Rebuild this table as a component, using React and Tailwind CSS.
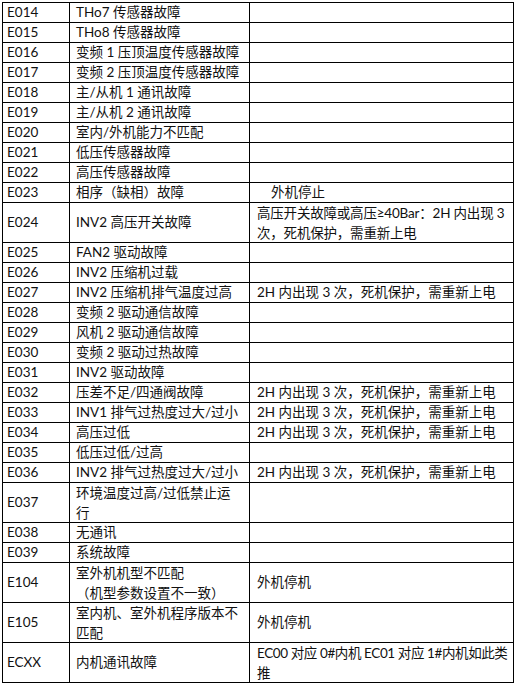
import React from "react";

const R2 = "2H 内出现 3 次，死机保护，需重新上电";

const rows = [
  ["E014", "THo7 传感器故障"],
  ["E015", "THo8 传感器故障"],
  ["E016", "变频 1 压顶温度传感器故障"],
  ["E017", "变频 2 压顶温度传感器故障"],
  ["E018", "主/从机 1 通讯故障"],
  ["E019", "主/从机 2 通讯故障"],
  ["E020", "室内/外机能力不匹配"],
  ["E021", "低压传感器故障"],
  ["E022", "高压传感器故障"],
  ["E023", "相序（缺相）故障", "外机停止", false, "pl-[21px]"],
  ["E024", "INV2 高压开关故障", ["高压开关故障或高压≥40Bar：2H 内出现 3", "次，死机保护，需重新上电"], true, "pl-[7px] tracking-[-0.2px]"],
  ["E025", "FAN2 驱动故障"],
  ["E026", "INV2 压缩机过载"],
  ["E027", "INV2 压缩机排气温度过高", R2],
  ["E028", "变频 2 驱动通信故障"],
  ["E029", "风机 2 驱动通信故障"],
  ["E030", "变频 2 驱动过热故障"],
  ["E031", "INV2 驱动故障"],
  ["E032", "压差不足/四通阀故障", R2],
  ["E033", "INV1 排气过热度过大/过小", R2],
  ["E034", "高压过低", R2],
  ["E035", "低压过低/过高"],
  ["E036", "INV2 排气过热度过大/过小", R2],
  ["E037", ["环境温度过高/过低禁止运", "行"], "", true],
  ["E038", "无通讯"],
  ["E039", "系统故障"],
  ["E104", ["室外机机型不匹配", "（机型参数设置不一致）"], "外机停机", true],
  ["E105", ["室内机、室外机程序版本不", "匹配"], "外机停机", true],
  ["ECXX", "内机通讯故障", ["EC00 对应 0#内机 EC01 对应 1#内机如此类", "推"], true, "pl-[7px] tracking-[-0.4px]"],
];

function Lines({ v, tall }) {
  if (Array.isArray(v)) {
    return (
      <div className={tall ? "leading-[20px]" : "leading-[19px]"}>
        {v.map((l, i) => (
          <div key={i} className="whitespace-nowrap">
            {l}
          </div>
        ))}
      </div>
    );
  }
  return <div className="whitespace-nowrap leading-[19px]">{v}</div>;
}

export default function App() {
  return (
    <div className="w-[516px] h-[685px] bg-white pt-[2px] pl-[2px]">
      <div
        className="grid grid-cols-[66px_179px_263px] gap-px bg-black p-px w-[512px] text-[13.5px] text-[#111]"
        style={{ fontFamily: '"Lato", "Noto Sans CJK SC", sans-serif' }}
      >
        {rows.map(([code, desc, note = "", tall = false, noteCls = "pl-[7px]"]) => {
          const h = tall ? "h-[39px]" : "h-[19px]";
          return (
            <React.Fragment key={code}>
              <div className={`bg-white ${h} flex items-center pl-[4px]`}>
                <div className="leading-[19px]">{code}</div>
              </div>
              <div className={`bg-white ${h} flex items-center pl-[6px]`}>
                <Lines v={desc} tall={tall} />
              </div>
              <div className={`bg-white ${h} flex items-center overflow-hidden ${noteCls}`}>
                <Lines v={note} tall={tall} />
              </div>
            </React.Fragment>
          );
        })}
      </div>
    </div>
  );
}
